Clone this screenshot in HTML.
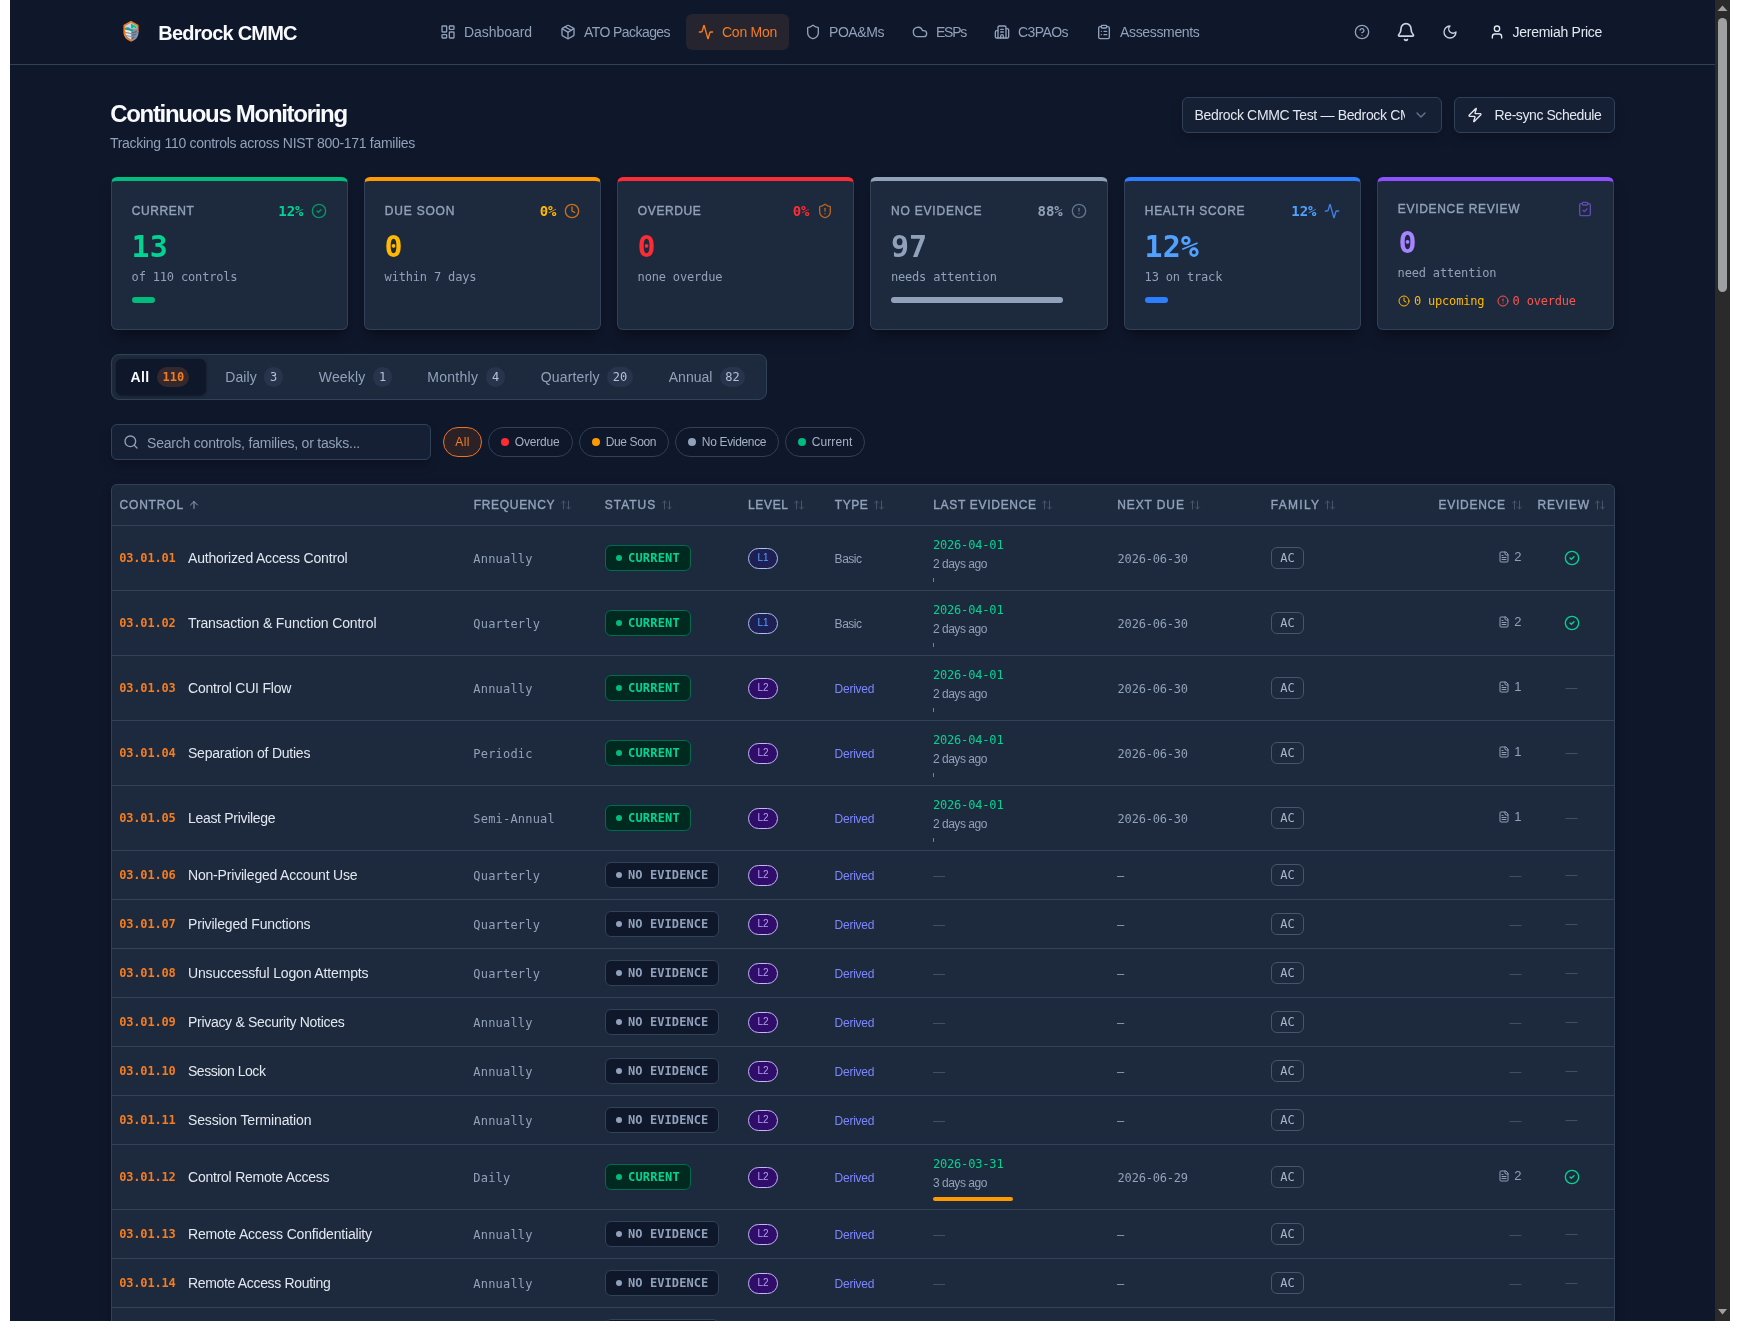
<!DOCTYPE html>
<html lang="en"><head><meta charset="utf-8"><title>Continuous Monitoring — Bedrock CMMC</title>
<style>
*{box-sizing:border-box}
html,body{margin:0;padding:0;background:#fff;overflow:hidden}
body{font-family:'Liberation Sans',sans-serif;}
#page{position:relative;width:1740px;height:1331px;overflow:hidden;background:#fff}
#vp{position:absolute;left:10px;top:0;width:1720px;height:1321px;overflow:hidden;background:#0f172b}
#c{position:absolute;left:-10px;top:0;width:1740px;height:1400px;will-change:transform}
.t{position:absolute;white-space:pre;margin:0;padding:0;text-decoration:none;display:block}
h1.t,p.t{font-weight:inherit}
h1.t{font-weight:700}
.i{position:absolute;display:block;overflow:visible}
.hdr{position:absolute;left:10px;top:0;width:1705px;height:65px;border-bottom:1px solid #314158}
.hdr>*,.hdr nav>*{margin-left:-10px}
.hdr nav{margin-left:0}
.navact{position:absolute;border-radius:6px;background:#26242e}
.ctl{position:absolute;border:1px solid #314158;border-radius:6px;background:#162034;box-shadow:0 6px 12px -2px rgba(0,0,0,.28);padding:0;margin:0}
.clip{position:absolute;overflow:hidden}
.card{position:absolute;background:#1d293d;border:1px solid #314158;border-top:4px solid;border-radius:6px;box-shadow:0 10px 15px -3px rgba(0,0,0,.35),0 4px 6px -4px rgba(0,0,0,.3)}
.bar{position:absolute;height:6px;border-radius:3px}
.tabs{position:absolute;background:#1d293d;border:1px solid #314158;border-radius:8px}
.tabact{position:absolute;background:#0f172b;border-radius:6px;box-shadow:0 1px 3px rgba(0,0,0,.4)}
.cnt{position:absolute;height:20px;border-radius:10px;background:#28344b;color:#b4c0d3;font-family:'DejaVu Sans Mono','Liberation Mono',monospace;font-size:12px;line-height:20px;text-align:center}
.cnt.on{background:#33282d;color:#f57c1f;font-weight:700}
.chip{position:absolute;border:1px solid #314158;border-radius:15px}
.chip.on{border-color:#ee7420;background:#2b2227}
.dot{position:absolute;border-radius:50%}
.tbl{position:absolute;background:#1d293d;border:1px solid #314158;border-radius:6px;box-shadow:0 4px 10px rgba(0,0,0,.3)}
.hl{position:absolute;height:1px;background:#314158}
.st{position:absolute;height:26px;border:1px solid;border-radius:6px;font-family:'DejaVu Sans Mono','Liberation Mono',monospace;font-size:12px;font-weight:700;line-height:24px;padding:0 10px 0 22px;letter-spacing:.2px;white-space:pre}
.st i{position:absolute;left:10px;top:9px;width:6px;height:6px;border-radius:50%}
.st.cur{background:#002a20;border-color:#006b50;color:#00d492}
.st.cur i{background:#00bc7d}
.st.non{background:#0f172b;border-color:#314158;color:#90a1b9;letter-spacing:.08px}
.st.non i{background:#90a1b9}
.lv{position:absolute;width:30px;height:21px;border:1px solid;border-radius:11px;font-size:10px;line-height:18px;text-align:center}
.lv.l1{background:#1e1f52;border-color:#a9c0f0;color:#51a2ff}
.lv.l2{background:#2f0d68;border-color:#c4b4ff;color:#b69cff}
.fam{position:absolute;width:33px;height:22px;border:1px solid #45556c;border-radius:6px;font-family:'DejaVu Sans Mono','Liberation Mono',monospace;font-size:12px;line-height:20px;text-align:center;color:#a9b5c8}
.pg{position:absolute;height:4px;border-radius:2px}
#sb{position:absolute;left:1705px;top:0;width:15px;height:1321px;background:#2a2a2a}
#sb i{position:absolute;left:3px;top:18px;width:9px;height:274px;border-radius:5px;background:#9fa0a1}
#sb svg{position:absolute;left:0}
</style></head>
<body><div id="page"><div id="vp"><div id="c">
<header class="hdr">
<svg class="i" style="left:121px;top:19px" width="20" height="24" viewBox="0 0 20 24">
<path d="M10 2.6 L16.8 6.4 V13.6 C16.8 17.6 13.8 20.4 10 21.8 C6.2 20.4 3.2 17.6 3.2 13.6 V6.4 Z" fill="#8a97ab"/>
<path d="M4.2 7 L10 3.8 L15.8 7 V9.5 L4.2 9.5 Z" fill="#cdd4df"/>
<path d="M9.9 4.4 L15.4 7.4 V9.2 L12.6 8.3 L11.4 9.4 L9.9 8.5 Z" fill="#00c389"/>
<path d="M4.2 9 L6 8.6 L9 9.4 L12.6 11.8 L12 12.6 L8.4 11.4 L4.2 10.6 Z" fill="#14a37f"/>
<path d="M5 8.4 L7.6 8.2 L9.2 9.4 L6.6 9.8 Z" fill="#3b82f6"/>
<path d="M4.2 10.8 L8 11.5 L10.5 12.6 V14 L4.2 12.8 Z" fill="#e8ecf2"/>
<path d="M10.5 12.6 L12.4 12.9 L15.8 11.2 V13.4 L10.5 14.6 Z" fill="#5d6b82"/>
<path d="M4.3 14 L10.5 15.4 V16.9 L5 15.9 Z" fill="#e8ecf2"/>
<path d="M10.5 15.4 L15.7 14.4 L15.1 16 L10.5 17 Z" fill="#5d6b82"/>
<path d="M5.8 17.1 L10.5 18.2 V20.6 C8.6 19.9 6.8 18.6 5.8 17.1 Z" fill="#dfe5ee"/>
<path d="M10.5 18.2 L14.4 17.3 C13.4 18.8 12 19.9 10.5 20.6 Z" fill="#5d6b82"/>
<path d="M16.8 12.5 V13.6 C16.8 17.6 13.8 20.4 10.9 21.5" fill="none" stroke="#8493ad" stroke-width="1.5" stroke-linecap="round"/>
<path d="M16.8 12.4 V6.4 L10 2.6 L3.2 6.4 V13.6 C3.2 17.6 6.2 20.4 10 21.8 L11.2 21.3" fill="none" stroke="#f47a1c" stroke-width="1.6" stroke-linejoin="round" stroke-linecap="round"/>
</svg>
<span class="t" style="left:158.30px;top:23.08px;font-size:20px;line-height:20px;color:#f8fafc;font-weight:700;letter-spacing:-0.775px">Bedrock CMMC</span>
<nav>
<svg class="i" style="left:440.00px;top:24.00px;" width="16" height="16" viewBox="0 0 24 24" fill="none" stroke="#90a1b9" stroke-width="2" stroke-linecap="round" stroke-linejoin="round"><rect width="7" height="9" x="3" y="3" rx="1"/><rect width="7" height="5" x="14" y="3" rx="1"/><rect width="7" height="9" x="14" y="12" rx="1"/><rect width="7" height="5" x="3" y="16" rx="1"/></svg>
<a class="t" style="left:464.00px;top:25.16px;font-size:14px;line-height:14px;color:#90a1b9;letter-spacing:-0.056px">Dashboard</a>
<svg class="i" style="left:560.00px;top:24.00px;" width="16" height="16" viewBox="0 0 24 24" fill="none" stroke="#90a1b9" stroke-width="2" stroke-linecap="round" stroke-linejoin="round"><path d="M11 21.73a2 2 0 0 0 2 0l7-4A2 2 0 0 0 21 16V8a2 2 0 0 0-1-1.73l-7-4a2 2 0 0 0-2 0l-7 4A2 2 0 0 0 3 8v8a2 2 0 0 0 1 1.73z"/><path d="M12 22V12"/><path d="m3.3 7 7.703 4.734a2 2 0 0 0 1.994 0L20.7 7"/><path d="m7.5 4.27 9 5.15"/></svg>
<a class="t" style="left:584.00px;top:25.16px;font-size:14px;line-height:14px;color:#90a1b9;letter-spacing:-0.572px">ATO Packages</a>
<div class="navact" style="left:686px;top:14px;width:103px;height:36px"></div>
<svg class="i" style="left:698.00px;top:24.00px;" width="16" height="16" viewBox="0 0 24 24" fill="none" stroke="#f57c1f" stroke-width="2" stroke-linecap="round" stroke-linejoin="round"><path d="M22 12h-2.48a2 2 0 0 0-1.93 1.46l-2.35 8.36a.25.25 0 0 1-.48 0L9.24 2.18a.25.25 0 0 0-.48 0l-2.35 8.36A2 2 0 0 1 4.49 12H2"/></svg>
<a class="t" style="left:722.00px;top:25.16px;font-size:14px;line-height:14px;color:#f57c1f;letter-spacing:-0.259px">Con Mon</a>
<svg class="i" style="left:805.00px;top:24.00px;" width="16" height="16" viewBox="0 0 24 24" fill="none" stroke="#90a1b9" stroke-width="2" stroke-linecap="round" stroke-linejoin="round"><path d="M20 13c0 5-3.5 7.5-7.66 8.95a1 1 0 0 1-.67-.01C7.5 20.5 4 18 4 13V6a1 1 0 0 1 1-1c2 0 4.5-1.2 6.24-2.72a1.17 1.17 0 0 1 1.52 0C14.51 3.81 17 5 19 5a1 1 0 0 1 1 1z"/></svg>
<a class="t" style="left:829.00px;top:25.16px;font-size:14px;line-height:14px;color:#90a1b9;letter-spacing:-0.430px">POA&amp;Ms</a>
<svg class="i" style="left:912.00px;top:24.00px;" width="16" height="16" viewBox="0 0 24 24" fill="none" stroke="#90a1b9" stroke-width="2" stroke-linecap="round" stroke-linejoin="round"><path d="M17.5 19H9a7 7 0 1 1 6.71-9h1.79a4.5 4.5 0 1 1 0 9Z"/></svg>
<a class="t" style="left:936.00px;top:25.16px;font-size:14px;line-height:14px;color:#90a1b9;letter-spacing:-1.254px">ESPs</a>
<svg class="i" style="left:994.00px;top:24.00px;" width="16" height="16" viewBox="0 0 24 24" fill="none" stroke="#90a1b9" stroke-width="2" stroke-linecap="round" stroke-linejoin="round"><path d="M10 12h4"/><path d="M10 8h4"/><path d="M14 21v-3a2 2 0 0 0-4 0v3"/><path d="M6 10H4a2 2 0 0 0-2 2v7a2 2 0 0 0 2 2h16a2 2 0 0 0 2-2V9a2 2 0 0 0-2-2h-2"/><path d="M6 21V5a2 2 0 0 1 2-2h8a2 2 0 0 1 2 2v16"/></svg>
<a class="t" style="left:1018.00px;top:25.16px;font-size:14px;line-height:14px;color:#90a1b9;letter-spacing:-0.573px">C3PAOs</a>
<svg class="i" style="left:1096.00px;top:24.00px;" width="16" height="16" viewBox="0 0 24 24" fill="none" stroke="#90a1b9" stroke-width="2" stroke-linecap="round" stroke-linejoin="round"><rect width="8" height="4" x="8" y="2" rx="1" ry="1"/><path d="M16 4h2a2 2 0 0 1 2 2v14a2 2 0 0 1-2 2H6a2 2 0 0 1-2-2V6a2 2 0 0 1 2-2h2"/><path d="M12 11h4"/><path d="M12 16h4"/><path d="M8 11h.01"/><path d="M8 16h.01"/></svg>
<a class="t" style="left:1120.00px;top:25.16px;font-size:14px;line-height:14px;color:#90a1b9;letter-spacing:-0.341px">Assessments</a>
</nav>
<svg class="i" style="left:1354.00px;top:24.00px;" width="16" height="16" viewBox="0 0 24 24" fill="none" stroke="#90a1b9" stroke-width="2" stroke-linecap="round" stroke-linejoin="round"><circle cx="12" cy="12" r="10"/><path d="M9.09 9a3 3 0 0 1 5.83 1c0 2-3 3-3 3"/><path d="M12 17h.01"/></svg>
<svg class="i" style="left:1396.00px;top:22.00px;" width="20" height="20" viewBox="0 0 24 24" fill="none" stroke="#cad5e2" stroke-width="2" stroke-linecap="round" stroke-linejoin="round"><path d="M10.268 21a2 2 0 0 0 3.464 0"/><path d="M3.262 15.326A1 1 0 0 0 4 17h16a1 1 0 0 0 .74-1.673C19.41 13.956 18 12.499 18 8A6 6 0 0 0 6 8c0 4.499-1.411 5.956-2.738 7.326"/></svg>
<svg class="i" style="left:1442.00px;top:24.00px;" width="16" height="16" viewBox="0 0 24 24" fill="none" stroke="#cad5e2" stroke-width="2" stroke-linecap="round" stroke-linejoin="round"><path d="M12 3a6 6 0 0 0 9 9 9 9 0 1 1-9-9Z"/></svg>
<svg class="i" style="left:1489.00px;top:24.00px;" width="16" height="16" viewBox="0 0 24 24" fill="none" stroke="#e2e8f0" stroke-width="2" stroke-linecap="round" stroke-linejoin="round"><path d="M19 21v-2a4 4 0 0 0-4-4H9a4 4 0 0 0-4 4v2"/><circle cx="12" cy="7" r="4"/></svg>
<span class="t" style="left:1512.60px;top:25.16px;font-size:14px;line-height:14px;color:#e2e8f0;letter-spacing:-0.277px">Jeremiah Price</span>
</header>
<main>
<h1 class="t" style="left:110.20px;top:102.20px;font-size:24px;line-height:24px;color:#f8fafc;font-weight:700;letter-spacing:-1.302px">Continuous Monitoring</h1>
<p class="t" style="left:110.00px;top:136.16px;font-size:14px;line-height:14px;color:#90a1b9;letter-spacing:-0.291px">Tracking 110 controls across NIST 800-171 families</p>
<div class="ctl" style="left:1182px;top:97px;width:260px;height:36px">
</div>
<div class="clip" style="left:1194px;top:100px;width:211px;height:30px"><span class="t"  style="left:0.60px;top:8.16px;font-size:14px;line-height:14px;color:#e2e8f0;letter-spacing:-0.340px">Bedrock CMMC Test — Bedrock CMMC</span></div>
<svg class="i" style="left:1413.00px;top:107.00px;" width="16" height="16" viewBox="0 0 24 24" fill="none" stroke="#62748e" stroke-width="2" stroke-linecap="round" stroke-linejoin="round"><path d="m6 9 6 6 6-6"/></svg>
<button class="ctl" style="left:1454px;top:97px;width:161px;height:36px"></button>
<svg class="i" style="left:1467.00px;top:107.00px;" width="16" height="16" viewBox="0 0 24 24" fill="none" stroke="#e2e8f0" stroke-width="2" stroke-linecap="round" stroke-linejoin="round"><path d="M4 14a1 1 0 0 1-.78-1.63l9.9-10.2a.5.5 0 0 1 .86.46l-1.92 6.02A1 1 0 0 0 13 10h7a1 1 0 0 1 .78 1.63l-9.9 10.2a.5.5 0 0 1-.86-.46l1.92-6.02A1 1 0 0 0 11 14z"/></svg>
<span class="t" style="left:1494.60px;top:108.16px;font-size:14px;line-height:14px;color:#e2e8f0;letter-spacing:-0.427px">Re-sync Schedule</span>
<section class="card" style="left:111px;top:177px;width:237.33px;height:153px;border-top-color:#00bc7d"></section>
<span class="t" style="left:131.80px;top:204.65px;font-size:12px;line-height:12px;color:#90a1b9;-webkit-text-stroke:0.38px;letter-spacing:0.575px">CURRENT</span>
<span class="t" style="right:1436.50px;top:204.16px;font-size:14px;line-height:14px;color:#00d492;font-family:'DejaVu Sans Mono','Liberation Mono',monospace;font-weight:700;letter-spacing:0.000px">12%</span>
<svg class="i" style="left:311.30px;top:203.00px;" width="16" height="16" viewBox="0 0 24 24" fill="none" stroke="#009966" stroke-width="2" stroke-linecap="round" stroke-linejoin="round"><circle cx="12" cy="12" r="10"/><path d="m9 12 2 2 4-4"/></svg>
<span class="t" style="left:131.60px;top:231.62px;font-size:30px;line-height:30px;color:#00d492;font-family:'DejaVu Sans Mono','Liberation Mono',monospace;font-weight:700;letter-spacing:0.000px">13</span>
<span class="t" style="left:131.60px;top:271.15px;font-size:12px;line-height:12px;color:#90a1b9;font-family:'DejaVu Sans Mono','Liberation Mono',monospace;letter-spacing:-0.170px">of 110 controls</span>
<div class="bar" style="left:132px;top:297px;width:23px;background:#00bc7d"></div>
<section class="card" style="left:364px;top:177px;width:237.33px;height:153px;border-top-color:#fe9a00"></section>
<span class="t" style="left:384.80px;top:204.65px;font-size:12px;line-height:12px;color:#90a1b9;-webkit-text-stroke:0.38px;letter-spacing:0.798px">DUE SOON</span>
<span class="t" style="right:1183.50px;top:204.16px;font-size:14px;line-height:14px;color:#ffb900;font-family:'DejaVu Sans Mono','Liberation Mono',monospace;font-weight:700;letter-spacing:0.000px">0%</span>
<svg class="i" style="left:564.30px;top:203.00px;" width="16" height="16" viewBox="0 0 24 24" fill="none" stroke="#c8701e" stroke-width="2" stroke-linecap="round" stroke-linejoin="round"><circle cx="12" cy="12" r="10"/><polyline points="12 6 12 12 16 14"/></svg>
<span class="t" style="left:384.60px;top:231.62px;font-size:30px;line-height:30px;color:#ffb900;font-family:'DejaVu Sans Mono','Liberation Mono',monospace;font-weight:700;letter-spacing:0.000px">0</span>
<span class="t" style="left:384.60px;top:271.15px;font-size:12px;line-height:12px;color:#90a1b9;font-family:'DejaVu Sans Mono','Liberation Mono',monospace;letter-spacing:-0.170px">within 7 days</span>
<section class="card" style="left:617px;top:177px;width:237.33px;height:153px;border-top-color:#fb2c36"></section>
<span class="t" style="left:637.80px;top:204.65px;font-size:12px;line-height:12px;color:#90a1b9;-webkit-text-stroke:0.38px;letter-spacing:0.622px">OVERDUE</span>
<span class="t" style="right:930.50px;top:204.16px;font-size:14px;line-height:14px;color:#fb2c36;font-family:'DejaVu Sans Mono','Liberation Mono',monospace;font-weight:700;letter-spacing:0.000px">0%</span>
<svg class="i" style="left:817.30px;top:203.00px;" width="16" height="16" viewBox="0 0 24 24" fill="none" stroke="#b8641f" stroke-width="2" stroke-linecap="round" stroke-linejoin="round"><path d="M20 13c0 5-3.5 7.5-7.66 8.95a1 1 0 0 1-.67-.01C7.5 20.5 4 18 4 13V6a1 1 0 0 1 1-1c2 0 4.5-1.2 6.24-2.72a1.17 1.17 0 0 1 1.52 0C14.51 3.81 17 5 19 5a1 1 0 0 1 1 1z"/><path d="M12 8v4"/><path d="M12 16h.01"/></svg>
<span class="t" style="left:637.60px;top:231.62px;font-size:30px;line-height:30px;color:#fb2c36;font-family:'DejaVu Sans Mono','Liberation Mono',monospace;font-weight:700;letter-spacing:0.000px">0</span>
<span class="t" style="left:637.60px;top:271.15px;font-size:12px;line-height:12px;color:#90a1b9;font-family:'DejaVu Sans Mono','Liberation Mono',monospace;letter-spacing:-0.170px">none overdue</span>
<section class="card" style="left:870.3px;top:177px;width:237.33px;height:153px;border-top-color:#90a1b9"></section>
<span class="t" style="left:891.10px;top:204.65px;font-size:12px;line-height:12px;color:#90a1b9;-webkit-text-stroke:0.38px;letter-spacing:0.783px">NO EVIDENCE</span>
<span class="t" style="right:677.20px;top:204.16px;font-size:14px;line-height:14px;color:#90a1b9;font-family:'DejaVu Sans Mono','Liberation Mono',monospace;font-weight:700;letter-spacing:0.000px">88%</span>
<svg class="i" style="left:1070.60px;top:203.00px;" width="16" height="16" viewBox="0 0 24 24" fill="none" stroke="#62748e" stroke-width="2" stroke-linecap="round" stroke-linejoin="round"><circle cx="12" cy="12" r="10"/><line x1="12" x2="12" y1="8" y2="12"/><line x1="12" x2="12.01" y1="16" y2="16"/></svg>
<span class="t" style="left:890.90px;top:231.62px;font-size:30px;line-height:30px;color:#90a1b9;font-family:'DejaVu Sans Mono','Liberation Mono',monospace;font-weight:700;letter-spacing:0.000px">97</span>
<span class="t" style="left:890.90px;top:271.15px;font-size:12px;line-height:12px;color:#90a1b9;font-family:'DejaVu Sans Mono','Liberation Mono',monospace;letter-spacing:-0.170px">needs attention</span>
<div class="bar" style="left:891.3px;top:297px;width:172px;background:#90a1b9"></div>
<section class="card" style="left:1124px;top:177px;width:237.33px;height:153px;border-top-color:#2b7fff"></section>
<span class="t" style="left:1144.80px;top:204.65px;font-size:12px;line-height:12px;color:#90a1b9;-webkit-text-stroke:0.38px;letter-spacing:0.669px">HEALTH SCORE</span>
<span class="t" style="right:423.50px;top:204.16px;font-size:14px;line-height:14px;color:#51a2ff;font-family:'DejaVu Sans Mono','Liberation Mono',monospace;font-weight:700;letter-spacing:0.000px">12%</span>
<svg class="i" style="left:1324.30px;top:203.00px;" width="16" height="16" viewBox="0 0 24 24" fill="none" stroke="#3f7fe0" stroke-width="2" stroke-linecap="round" stroke-linejoin="round"><path d="M22 12h-2.48a2 2 0 0 0-1.93 1.46l-2.35 8.36a.25.25 0 0 1-.48 0L9.24 2.18a.25.25 0 0 0-.48 0l-2.35 8.36A2 2 0 0 1 4.49 12H2"/></svg>
<span class="t" style="left:1144.60px;top:231.62px;font-size:30px;line-height:30px;color:#51a2ff;font-family:'DejaVu Sans Mono','Liberation Mono',monospace;font-weight:700;letter-spacing:0.000px">12%</span>
<span class="t" style="left:1144.60px;top:271.15px;font-size:12px;line-height:12px;color:#90a1b9;font-family:'DejaVu Sans Mono','Liberation Mono',monospace;letter-spacing:-0.170px">13 on track</span>
<div class="bar" style="left:1145px;top:297px;width:23px;background:#2b7fff"></div>
<section class="card" style="left:1377px;top:177px;width:237.33px;height:153px;border-top-color:#8e51ff"></section>
<span class="t" style="left:1397.80px;top:202.85px;font-size:12px;line-height:12px;color:#90a1b9;-webkit-text-stroke:0.38px;letter-spacing:0.691px">EVIDENCE REVIEW</span>
<svg class="i" style="left:1577.00px;top:201.00px;" width="16" height="16" viewBox="0 0 24 24" fill="none" stroke="#5f4bb0" stroke-width="2" stroke-linecap="round" stroke-linejoin="round"><rect width="8" height="4" x="8" y="2" rx="1" ry="1"/><path d="M16 4h2a2 2 0 0 1 2 2v14a2 2 0 0 1-2 2H6a2 2 0 0 1-2-2V6a2 2 0 0 1 2-2h2"/><path d="m9 14 2 2 4-4"/></svg>
<span class="t" style="left:1398.40px;top:227.82px;font-size:30px;line-height:30px;color:#a684ff;font-family:'DejaVu Sans Mono','Liberation Mono',monospace;font-weight:700;letter-spacing:0.000px">0</span>
<span class="t" style="left:1397.60px;top:266.95px;font-size:12px;line-height:12px;color:#90a1b9;font-family:'DejaVu Sans Mono','Liberation Mono',monospace;letter-spacing:-0.170px">need attention</span>
<svg class="i" style="left:1398.00px;top:295.00px;" width="12" height="12" viewBox="0 0 24 24" fill="none" stroke="#ffb900" stroke-width="2" stroke-linecap="round" stroke-linejoin="round"><circle cx="12" cy="12" r="10"/><polyline points="12 6 12 12 16 14"/></svg>
<span class="t" style="left:1414.00px;top:294.55px;font-size:12px;line-height:12px;color:#ffb900;font-family:'DejaVu Sans Mono','Liberation Mono',monospace;letter-spacing:-0.200px">0 upcoming</span>
<svg class="i" style="left:1497.00px;top:295.00px;" width="12" height="12" viewBox="0 0 24 24" fill="none" stroke="#f9564f" stroke-width="2" stroke-linecap="round" stroke-linejoin="round"><circle cx="12" cy="12" r="10"/><line x1="12" x2="12" y1="8" y2="12"/><line x1="12" x2="12.01" y1="16" y2="16"/></svg>
<span class="t" style="left:1512.60px;top:294.55px;font-size:12px;line-height:12px;color:#f9564f;font-family:'DejaVu Sans Mono','Liberation Mono',monospace;letter-spacing:-0.200px">0 overdue</span>
<div class="tabs" style="left:111px;top:354px;width:656px;height:46px"></div>
<div class="tabact" style="left:116px;top:359px;width:90px;height:36px"></div>
<span class="t" style="left:130.60px;top:370.16px;font-size:14px;line-height:14px;color:#f8fafc;font-weight:700;letter-spacing:0.370px">All</span>
<span class="cnt on" style="left:157.4px;top:367px;width:32px">110</span>
<span class="t" style="left:225.30px;top:370.16px;font-size:14px;line-height:14px;color:#90a1b9;letter-spacing:0.075px">Daily</span>
<span class="cnt" style="left:264px;top:367px;width:19px">3</span>
<span class="t" style="left:318.80px;top:370.16px;font-size:14px;line-height:14px;color:#90a1b9;letter-spacing:0.141px">Weekly</span>
<span class="cnt" style="left:373px;top:367px;width:19px">1</span>
<span class="t" style="left:427.20px;top:370.16px;font-size:14px;line-height:14px;color:#90a1b9;letter-spacing:0.281px">Monthly</span>
<span class="cnt" style="left:486px;top:367px;width:19px">4</span>
<span class="t" style="left:540.80px;top:370.16px;font-size:14px;line-height:14px;color:#90a1b9;letter-spacing:0.136px">Quarterly</span>
<span class="cnt" style="left:607.4px;top:367px;width:25.2px">20</span>
<span class="t" style="left:668.80px;top:370.16px;font-size:14px;line-height:14px;color:#90a1b9;letter-spacing:-0.016px">Annual</span>
<span class="cnt" style="left:720px;top:367px;width:25.2px">82</span>
<div class="ctl" style="left:111px;top:424px;width:320px;height:36px"></div>
<svg class="i" style="left:123.00px;top:434.00px;" width="16" height="16" viewBox="0 0 24 24" fill="none" stroke="#90a1b9" stroke-width="2" stroke-linecap="round" stroke-linejoin="round"><circle cx="11" cy="11" r="8"/><path d="m21 21-4.3-4.3"/></svg>
<span class="t" style="left:147.00px;top:436.16px;font-size:14px;line-height:14px;color:#90a1b9;letter-spacing:-0.210px">Search controls, families, or tasks...</span>
<div class="chip on" style="left:443px;top:427px;width:39px;height:30px"></div>
<span class="t" style="left:455.20px;top:435.85px;font-size:12px;line-height:12px;color:#f57c1f;letter-spacing:0.485px">All</span>
<div class="chip" style="left:488px;top:427px;width:85px;height:30px"></div>
<i class="dot" style="left:501px;top:438px;width:8px;height:8px;background:#fb2c36"></i>
<span class="t" style="left:514.80px;top:435.85px;font-size:12px;line-height:12px;color:#a3b1c6;letter-spacing:-0.176px">Overdue</span>
<div class="chip" style="left:579px;top:427px;width:90px;height:30px"></div>
<i class="dot" style="left:592px;top:438px;width:8px;height:8px;background:#fe9a00"></i>
<span class="t" style="left:605.80px;top:435.85px;font-size:12px;line-height:12px;color:#a3b1c6;letter-spacing:-0.397px">Due Soon</span>
<div class="chip" style="left:675px;top:427px;width:104px;height:30px"></div>
<i class="dot" style="left:688px;top:438px;width:8px;height:8px;background:#90a1b9"></i>
<span class="t" style="left:701.80px;top:435.85px;font-size:12px;line-height:12px;color:#a3b1c6;letter-spacing:-0.332px">No Evidence</span>
<div class="chip" style="left:785px;top:427px;width:80px;height:30px"></div>
<i class="dot" style="left:798px;top:438px;width:8px;height:8px;background:#00bc7d"></i>
<span class="t" style="left:811.80px;top:435.85px;font-size:12px;line-height:12px;color:#a3b1c6;letter-spacing:0.069px">Current</span>
<div class="tbl" style="left:111px;top:484px;width:1504px;height:900px"></div>
<span class="t" style="left:119.50px;top:498.85px;font-size:12px;line-height:12px;color:#90a1b9;-webkit-text-stroke:0.38px;letter-spacing:0.818px">CONTROL</span>
<span class="t" style="left:473.70px;top:498.85px;font-size:12px;line-height:12px;color:#90a1b9;-webkit-text-stroke:0.38px;letter-spacing:0.695px">FREQUENCY</span>
<svg class="i" style="left:560.00px;top:498.50px;" width="12" height="12" viewBox="0 0 24 24" fill="none" stroke="#45556c" stroke-width="2" stroke-linecap="round" stroke-linejoin="round"><path d="m21 16-4 4-4-4"/><path d="M17 20V4"/><path d="m3 8 4-4 4 4"/><path d="M7 4v16"/></svg>
<span class="t" style="left:604.70px;top:498.85px;font-size:12px;line-height:12px;color:#90a1b9;-webkit-text-stroke:0.38px;letter-spacing:1.006px">STATUS</span>
<svg class="i" style="left:660.50px;top:498.50px;" width="12" height="12" viewBox="0 0 24 24" fill="none" stroke="#45556c" stroke-width="2" stroke-linecap="round" stroke-linejoin="round"><path d="m21 16-4 4-4-4"/><path d="M17 20V4"/><path d="m3 8 4-4 4 4"/><path d="M7 4v16"/></svg>
<span class="t" style="left:748.00px;top:498.85px;font-size:12px;line-height:12px;color:#90a1b9;-webkit-text-stroke:0.38px;letter-spacing:0.648px">LEVEL</span>
<svg class="i" style="left:792.70px;top:498.50px;" width="12" height="12" viewBox="0 0 24 24" fill="none" stroke="#45556c" stroke-width="2" stroke-linecap="round" stroke-linejoin="round"><path d="m21 16-4 4-4-4"/><path d="M17 20V4"/><path d="m3 8 4-4 4 4"/><path d="M7 4v16"/></svg>
<span class="t" style="left:834.80px;top:498.85px;font-size:12px;line-height:12px;color:#90a1b9;-webkit-text-stroke:0.38px;letter-spacing:0.564px">TYPE</span>
<svg class="i" style="left:873.00px;top:498.50px;" width="12" height="12" viewBox="0 0 24 24" fill="none" stroke="#45556c" stroke-width="2" stroke-linecap="round" stroke-linejoin="round"><path d="m21 16-4 4-4-4"/><path d="M17 20V4"/><path d="m3 8 4-4 4 4"/><path d="M7 4v16"/></svg>
<span class="t" style="left:933.20px;top:498.85px;font-size:12px;line-height:12px;color:#90a1b9;-webkit-text-stroke:0.38px;letter-spacing:0.701px">LAST EVIDENCE</span>
<svg class="i" style="left:1040.60px;top:498.50px;" width="12" height="12" viewBox="0 0 24 24" fill="none" stroke="#45556c" stroke-width="2" stroke-linecap="round" stroke-linejoin="round"><path d="m21 16-4 4-4-4"/><path d="M17 20V4"/><path d="m3 8 4-4 4 4"/><path d="M7 4v16"/></svg>
<span class="t" style="left:1117.20px;top:498.85px;font-size:12px;line-height:12px;color:#90a1b9;-webkit-text-stroke:0.38px;letter-spacing:0.891px">NEXT DUE</span>
<svg class="i" style="left:1188.60px;top:498.50px;" width="12" height="12" viewBox="0 0 24 24" fill="none" stroke="#45556c" stroke-width="2" stroke-linecap="round" stroke-linejoin="round"><path d="m21 16-4 4-4-4"/><path d="M17 20V4"/><path d="m3 8 4-4 4 4"/><path d="M7 4v16"/></svg>
<span class="t" style="left:1270.70px;top:498.85px;font-size:12px;line-height:12px;color:#90a1b9;-webkit-text-stroke:0.38px;letter-spacing:1.301px">FAMILY</span>
<svg class="i" style="left:1324.40px;top:498.50px;" width="12" height="12" viewBox="0 0 24 24" fill="none" stroke="#45556c" stroke-width="2" stroke-linecap="round" stroke-linejoin="round"><path d="m21 16-4 4-4-4"/><path d="M17 20V4"/><path d="m3 8 4-4 4 4"/><path d="M7 4v16"/></svg>
<span class="t" style="left:1438.40px;top:498.85px;font-size:12px;line-height:12px;color:#90a1b9;-webkit-text-stroke:0.38px;letter-spacing:0.755px">EVIDENCE</span>
<svg class="i" style="left:1510.50px;top:498.50px;" width="12" height="12" viewBox="0 0 24 24" fill="none" stroke="#45556c" stroke-width="2" stroke-linecap="round" stroke-linejoin="round"><path d="m21 16-4 4-4-4"/><path d="M17 20V4"/><path d="m3 8 4-4 4 4"/><path d="M7 4v16"/></svg>
<span class="t" style="left:1537.40px;top:498.85px;font-size:12px;line-height:12px;color:#90a1b9;-webkit-text-stroke:0.38px;letter-spacing:0.876px">REVIEW</span>
<svg class="i" style="left:1593.60px;top:498.50px;" width="12" height="12" viewBox="0 0 24 24" fill="none" stroke="#45556c" stroke-width="2" stroke-linecap="round" stroke-linejoin="round"><path d="m21 16-4 4-4-4"/><path d="M17 20V4"/><path d="m3 8 4-4 4 4"/><path d="M7 4v16"/></svg>
<svg class="i" style="left:188.20px;top:498.50px;" width="12" height="12" viewBox="0 0 24 24" fill="none" stroke="#90a1b9" stroke-width="2" stroke-linecap="round" stroke-linejoin="round"><path d="m5 12 7-7 7 7"/><path d="M12 19V5"/></svg>
<div class="hl" style="left:112px;top:525px;width:1502px"></div>
<span class="t" style="left:119.20px;top:551.75px;font-size:12px;line-height:12px;color:#f57c1f;font-family:'DejaVu Sans Mono','Liberation Mono',monospace;font-weight:700;letter-spacing:-0.170px">03.01.01</span>
<span class="t" style="left:188.00px;top:550.96px;font-size:14px;line-height:14px;color:#e2e8f0;letter-spacing:-0.192px">Authorized Access Control</span>
<span class="t" style="left:473.30px;top:553.45px;font-size:12px;line-height:12px;color:#90a1b9;font-family:'DejaVu Sans Mono','Liberation Mono',monospace;letter-spacing:0.200px">Annually</span>
<span class="st cur" style="left:605px;top:545.0px"><i></i>CURRENT</span>
<span class="lv l1" style="left:748px;top:547.5px">L1</span>
<span class="t" style="left:834.60px;top:553.25px;font-size:12px;line-height:12px;color:#90a1b9;letter-spacing:-0.469px">Basic</span>
<span class="t" style="left:932.90px;top:538.85px;font-size:12px;line-height:12px;color:#00d492;font-family:'DejaVu Sans Mono','Liberation Mono',monospace;letter-spacing:-0.170px">2026-04-01</span>
<span class="t" style="left:932.90px;top:557.85px;font-size:12px;line-height:12px;color:#90a1b9;letter-spacing:-0.472px">2 days ago</span>
<div class="pg" style="left:933px;top:578px;width:1px;background:#00bc7d;border-radius:0"></div>
<span class="t" style="left:1117.60px;top:553.35px;font-size:12px;line-height:12px;color:#90a1b9;font-family:'DejaVu Sans Mono','Liberation Mono',monospace;letter-spacing:-0.200px">2026-06-30</span>
<span class="fam" style="left:1271px;top:547.0px">AC</span>
<svg class="i" style="left:1498.00px;top:551.00px;" width="12" height="12" viewBox="0 0 24 24" fill="none" stroke="#90a1b9" stroke-width="2" stroke-linecap="round" stroke-linejoin="round"><path d="M15 2H6a2 2 0 0 0-2 2v16a2 2 0 0 0 2 2h12a2 2 0 0 0 2-2V7Z"/><path d="M14 2v4a2 2 0 0 0 2 2h4"/><path d="M10 9H8"/><path d="M16 13H8"/><path d="M16 17H8"/></svg>
<span class="t" style="right:218.60px;top:549.90px;font-size:13px;line-height:13px;color:#90a1b9;letter-spacing:0.000px">2</span>
<svg class="i" style="left:1564.00px;top:550.00px;" width="16" height="16" viewBox="0 0 24 24" fill="none" stroke="#00d492" stroke-width="2" stroke-linecap="round" stroke-linejoin="round"><circle cx="12" cy="12" r="10"/><path d="m9 12 2 2 4-4"/></svg>
<div class="hl" style="left:112px;top:590px;width:1502px"></div>
<span class="t" style="left:119.20px;top:616.75px;font-size:12px;line-height:12px;color:#f57c1f;font-family:'DejaVu Sans Mono','Liberation Mono',monospace;font-weight:700;letter-spacing:-0.170px">03.01.02</span>
<span class="t" style="left:188.00px;top:615.96px;font-size:14px;line-height:14px;color:#e2e8f0;letter-spacing:-0.136px">Transaction &amp; Function Control</span>
<span class="t" style="left:473.30px;top:618.45px;font-size:12px;line-height:12px;color:#90a1b9;font-family:'DejaVu Sans Mono','Liberation Mono',monospace;letter-spacing:0.200px">Quarterly</span>
<span class="st cur" style="left:605px;top:610.0px"><i></i>CURRENT</span>
<span class="lv l1" style="left:748px;top:612.5px">L1</span>
<span class="t" style="left:834.60px;top:618.25px;font-size:12px;line-height:12px;color:#90a1b9;letter-spacing:-0.469px">Basic</span>
<span class="t" style="left:932.90px;top:603.85px;font-size:12px;line-height:12px;color:#00d492;font-family:'DejaVu Sans Mono','Liberation Mono',monospace;letter-spacing:-0.170px">2026-04-01</span>
<span class="t" style="left:932.90px;top:622.85px;font-size:12px;line-height:12px;color:#90a1b9;letter-spacing:-0.472px">2 days ago</span>
<div class="pg" style="left:933px;top:643px;width:1px;background:#00bc7d;border-radius:0"></div>
<span class="t" style="left:1117.60px;top:618.35px;font-size:12px;line-height:12px;color:#90a1b9;font-family:'DejaVu Sans Mono','Liberation Mono',monospace;letter-spacing:-0.200px">2026-06-30</span>
<span class="fam" style="left:1271px;top:612.0px">AC</span>
<svg class="i" style="left:1498.00px;top:616.00px;" width="12" height="12" viewBox="0 0 24 24" fill="none" stroke="#90a1b9" stroke-width="2" stroke-linecap="round" stroke-linejoin="round"><path d="M15 2H6a2 2 0 0 0-2 2v16a2 2 0 0 0 2 2h12a2 2 0 0 0 2-2V7Z"/><path d="M14 2v4a2 2 0 0 0 2 2h4"/><path d="M10 9H8"/><path d="M16 13H8"/><path d="M16 17H8"/></svg>
<span class="t" style="right:218.60px;top:614.90px;font-size:13px;line-height:13px;color:#90a1b9;letter-spacing:0.000px">2</span>
<svg class="i" style="left:1564.00px;top:615.00px;" width="16" height="16" viewBox="0 0 24 24" fill="none" stroke="#00d492" stroke-width="2" stroke-linecap="round" stroke-linejoin="round"><circle cx="12" cy="12" r="10"/><path d="m9 12 2 2 4-4"/></svg>
<div class="hl" style="left:112px;top:655px;width:1502px"></div>
<span class="t" style="left:119.20px;top:681.75px;font-size:12px;line-height:12px;color:#f57c1f;font-family:'DejaVu Sans Mono','Liberation Mono',monospace;font-weight:700;letter-spacing:-0.170px">03.01.03</span>
<span class="t" style="left:188.00px;top:680.96px;font-size:14px;line-height:14px;color:#e2e8f0;letter-spacing:-0.218px">Control CUI Flow</span>
<span class="t" style="left:473.30px;top:683.45px;font-size:12px;line-height:12px;color:#90a1b9;font-family:'DejaVu Sans Mono','Liberation Mono',monospace;letter-spacing:0.200px">Annually</span>
<span class="st cur" style="left:605px;top:675.0px"><i></i>CURRENT</span>
<span class="lv l2" style="left:748px;top:677.5px">L2</span>
<span class="t" style="left:834.60px;top:683.25px;font-size:12px;line-height:12px;color:#7c86ff;letter-spacing:-0.251px">Derived</span>
<span class="t" style="left:932.90px;top:668.85px;font-size:12px;line-height:12px;color:#00d492;font-family:'DejaVu Sans Mono','Liberation Mono',monospace;letter-spacing:-0.170px">2026-04-01</span>
<span class="t" style="left:932.90px;top:687.85px;font-size:12px;line-height:12px;color:#90a1b9;letter-spacing:-0.472px">2 days ago</span>
<div class="pg" style="left:933px;top:708px;width:1px;background:#00bc7d;border-radius:0"></div>
<span class="t" style="left:1117.60px;top:683.35px;font-size:12px;line-height:12px;color:#90a1b9;font-family:'DejaVu Sans Mono','Liberation Mono',monospace;letter-spacing:-0.200px">2026-06-30</span>
<span class="fam" style="left:1271px;top:677.0px">AC</span>
<svg class="i" style="left:1498.00px;top:681.00px;" width="12" height="12" viewBox="0 0 24 24" fill="none" stroke="#90a1b9" stroke-width="2" stroke-linecap="round" stroke-linejoin="round"><path d="M15 2H6a2 2 0 0 0-2 2v16a2 2 0 0 0 2 2h12a2 2 0 0 0 2-2V7Z"/><path d="M14 2v4a2 2 0 0 0 2 2h4"/><path d="M10 9H8"/><path d="M16 13H8"/><path d="M16 17H8"/></svg>
<span class="t" style="right:218.60px;top:679.90px;font-size:13px;line-height:13px;color:#90a1b9;letter-spacing:0.000px">1</span>
<span class="t" style="left:1565.50px;top:682.25px;font-size:12px;line-height:12px;color:#45556c;letter-spacing:0.000px">—</span>
<div class="hl" style="left:112px;top:720px;width:1502px"></div>
<span class="t" style="left:119.20px;top:746.75px;font-size:12px;line-height:12px;color:#f57c1f;font-family:'DejaVu Sans Mono','Liberation Mono',monospace;font-weight:700;letter-spacing:-0.170px">03.01.04</span>
<span class="t" style="left:188.00px;top:745.96px;font-size:14px;line-height:14px;color:#e2e8f0;letter-spacing:-0.233px">Separation of Duties</span>
<span class="t" style="left:473.30px;top:748.45px;font-size:12px;line-height:12px;color:#90a1b9;font-family:'DejaVu Sans Mono','Liberation Mono',monospace;letter-spacing:0.200px">Periodic</span>
<span class="st cur" style="left:605px;top:740.0px"><i></i>CURRENT</span>
<span class="lv l2" style="left:748px;top:742.5px">L2</span>
<span class="t" style="left:834.60px;top:748.25px;font-size:12px;line-height:12px;color:#7c86ff;letter-spacing:-0.251px">Derived</span>
<span class="t" style="left:932.90px;top:733.85px;font-size:12px;line-height:12px;color:#00d492;font-family:'DejaVu Sans Mono','Liberation Mono',monospace;letter-spacing:-0.170px">2026-04-01</span>
<span class="t" style="left:932.90px;top:752.85px;font-size:12px;line-height:12px;color:#90a1b9;letter-spacing:-0.472px">2 days ago</span>
<div class="pg" style="left:933px;top:773px;width:1px;background:#00bc7d;border-radius:0"></div>
<span class="t" style="left:1117.60px;top:748.35px;font-size:12px;line-height:12px;color:#90a1b9;font-family:'DejaVu Sans Mono','Liberation Mono',monospace;letter-spacing:-0.200px">2026-06-30</span>
<span class="fam" style="left:1271px;top:742.0px">AC</span>
<svg class="i" style="left:1498.00px;top:746.00px;" width="12" height="12" viewBox="0 0 24 24" fill="none" stroke="#90a1b9" stroke-width="2" stroke-linecap="round" stroke-linejoin="round"><path d="M15 2H6a2 2 0 0 0-2 2v16a2 2 0 0 0 2 2h12a2 2 0 0 0 2-2V7Z"/><path d="M14 2v4a2 2 0 0 0 2 2h4"/><path d="M10 9H8"/><path d="M16 13H8"/><path d="M16 17H8"/></svg>
<span class="t" style="right:218.60px;top:744.90px;font-size:13px;line-height:13px;color:#90a1b9;letter-spacing:0.000px">1</span>
<span class="t" style="left:1565.50px;top:747.25px;font-size:12px;line-height:12px;color:#45556c;letter-spacing:0.000px">—</span>
<div class="hl" style="left:112px;top:785px;width:1502px"></div>
<span class="t" style="left:119.20px;top:811.75px;font-size:12px;line-height:12px;color:#f57c1f;font-family:'DejaVu Sans Mono','Liberation Mono',monospace;font-weight:700;letter-spacing:-0.170px">03.01.05</span>
<span class="t" style="left:188.00px;top:810.96px;font-size:14px;line-height:14px;color:#e2e8f0;letter-spacing:-0.309px">Least Privilege</span>
<span class="t" style="left:473.30px;top:813.45px;font-size:12px;line-height:12px;color:#90a1b9;font-family:'DejaVu Sans Mono','Liberation Mono',monospace;letter-spacing:0.200px">Semi-Annual</span>
<span class="st cur" style="left:605px;top:805.0px"><i></i>CURRENT</span>
<span class="lv l2" style="left:748px;top:807.5px">L2</span>
<span class="t" style="left:834.60px;top:813.25px;font-size:12px;line-height:12px;color:#7c86ff;letter-spacing:-0.251px">Derived</span>
<span class="t" style="left:932.90px;top:798.85px;font-size:12px;line-height:12px;color:#00d492;font-family:'DejaVu Sans Mono','Liberation Mono',monospace;letter-spacing:-0.170px">2026-04-01</span>
<span class="t" style="left:932.90px;top:817.85px;font-size:12px;line-height:12px;color:#90a1b9;letter-spacing:-0.472px">2 days ago</span>
<div class="pg" style="left:933px;top:838px;width:1px;background:#00bc7d;border-radius:0"></div>
<span class="t" style="left:1117.60px;top:813.35px;font-size:12px;line-height:12px;color:#90a1b9;font-family:'DejaVu Sans Mono','Liberation Mono',monospace;letter-spacing:-0.200px">2026-06-30</span>
<span class="fam" style="left:1271px;top:807.0px">AC</span>
<svg class="i" style="left:1498.00px;top:811.00px;" width="12" height="12" viewBox="0 0 24 24" fill="none" stroke="#90a1b9" stroke-width="2" stroke-linecap="round" stroke-linejoin="round"><path d="M15 2H6a2 2 0 0 0-2 2v16a2 2 0 0 0 2 2h12a2 2 0 0 0 2-2V7Z"/><path d="M14 2v4a2 2 0 0 0 2 2h4"/><path d="M10 9H8"/><path d="M16 13H8"/><path d="M16 17H8"/></svg>
<span class="t" style="right:218.60px;top:809.90px;font-size:13px;line-height:13px;color:#90a1b9;letter-spacing:0.000px">1</span>
<span class="t" style="left:1565.50px;top:812.25px;font-size:12px;line-height:12px;color:#45556c;letter-spacing:0.000px">—</span>
<div class="hl" style="left:112px;top:850px;width:1502px"></div>
<span class="t" style="left:119.20px;top:868.75px;font-size:12px;line-height:12px;color:#f57c1f;font-family:'DejaVu Sans Mono','Liberation Mono',monospace;font-weight:700;letter-spacing:-0.170px">03.01.06</span>
<span class="t" style="left:188.00px;top:867.96px;font-size:14px;line-height:14px;color:#e2e8f0;letter-spacing:-0.189px">Non-Privileged Account Use</span>
<span class="t" style="left:473.30px;top:870.45px;font-size:12px;line-height:12px;color:#90a1b9;font-family:'DejaVu Sans Mono','Liberation Mono',monospace;letter-spacing:0.200px">Quarterly</span>
<span class="st non" style="left:605px;top:862.0px"><i></i>NO EVIDENCE</span>
<span class="lv l2" style="left:748px;top:864.5px">L2</span>
<span class="t" style="left:834.60px;top:870.25px;font-size:12px;line-height:12px;color:#7c86ff;letter-spacing:-0.251px">Derived</span>
<span class="t" style="left:932.90px;top:870.25px;font-size:12px;line-height:12px;color:#45556c;letter-spacing:0.000px">—</span>
<span class="t" style="left:1116.90px;top:870.45px;font-size:12px;line-height:12px;color:#90a1b9;font-family:'DejaVu Sans Mono','Liberation Mono',monospace;letter-spacing:0.000px">–</span>
<span class="fam" style="left:1271px;top:864.0px">AC</span>
<span class="t" style="right:218.60px;top:870.25px;font-size:12px;line-height:12px;color:#45556c;letter-spacing:0.000px">—</span>
<span class="t" style="left:1565.50px;top:869.25px;font-size:12px;line-height:12px;color:#45556c;letter-spacing:0.000px">—</span>
<div class="hl" style="left:112px;top:899px;width:1502px"></div>
<span class="t" style="left:119.20px;top:917.75px;font-size:12px;line-height:12px;color:#f57c1f;font-family:'DejaVu Sans Mono','Liberation Mono',monospace;font-weight:700;letter-spacing:-0.170px">03.01.07</span>
<span class="t" style="left:188.00px;top:916.96px;font-size:14px;line-height:14px;color:#e2e8f0;letter-spacing:-0.183px">Privileged Functions</span>
<span class="t" style="left:473.30px;top:919.45px;font-size:12px;line-height:12px;color:#90a1b9;font-family:'DejaVu Sans Mono','Liberation Mono',monospace;letter-spacing:0.200px">Quarterly</span>
<span class="st non" style="left:605px;top:911.0px"><i></i>NO EVIDENCE</span>
<span class="lv l2" style="left:748px;top:913.5px">L2</span>
<span class="t" style="left:834.60px;top:919.25px;font-size:12px;line-height:12px;color:#7c86ff;letter-spacing:-0.251px">Derived</span>
<span class="t" style="left:932.90px;top:919.25px;font-size:12px;line-height:12px;color:#45556c;letter-spacing:0.000px">—</span>
<span class="t" style="left:1116.90px;top:919.45px;font-size:12px;line-height:12px;color:#90a1b9;font-family:'DejaVu Sans Mono','Liberation Mono',monospace;letter-spacing:0.000px">–</span>
<span class="fam" style="left:1271px;top:913.0px">AC</span>
<span class="t" style="right:218.60px;top:919.25px;font-size:12px;line-height:12px;color:#45556c;letter-spacing:0.000px">—</span>
<span class="t" style="left:1565.50px;top:918.25px;font-size:12px;line-height:12px;color:#45556c;letter-spacing:0.000px">—</span>
<div class="hl" style="left:112px;top:948px;width:1502px"></div>
<span class="t" style="left:119.20px;top:966.75px;font-size:12px;line-height:12px;color:#f57c1f;font-family:'DejaVu Sans Mono','Liberation Mono',monospace;font-weight:700;letter-spacing:-0.170px">03.01.08</span>
<span class="t" style="left:188.00px;top:965.96px;font-size:14px;line-height:14px;color:#e2e8f0;letter-spacing:-0.150px">Unsuccessful Logon Attempts</span>
<span class="t" style="left:473.30px;top:968.45px;font-size:12px;line-height:12px;color:#90a1b9;font-family:'DejaVu Sans Mono','Liberation Mono',monospace;letter-spacing:0.200px">Quarterly</span>
<span class="st non" style="left:605px;top:960.0px"><i></i>NO EVIDENCE</span>
<span class="lv l2" style="left:748px;top:962.5px">L2</span>
<span class="t" style="left:834.60px;top:968.25px;font-size:12px;line-height:12px;color:#7c86ff;letter-spacing:-0.251px">Derived</span>
<span class="t" style="left:932.90px;top:968.25px;font-size:12px;line-height:12px;color:#45556c;letter-spacing:0.000px">—</span>
<span class="t" style="left:1116.90px;top:968.45px;font-size:12px;line-height:12px;color:#90a1b9;font-family:'DejaVu Sans Mono','Liberation Mono',monospace;letter-spacing:0.000px">–</span>
<span class="fam" style="left:1271px;top:962.0px">AC</span>
<span class="t" style="right:218.60px;top:968.25px;font-size:12px;line-height:12px;color:#45556c;letter-spacing:0.000px">—</span>
<span class="t" style="left:1565.50px;top:967.25px;font-size:12px;line-height:12px;color:#45556c;letter-spacing:0.000px">—</span>
<div class="hl" style="left:112px;top:997px;width:1502px"></div>
<span class="t" style="left:119.20px;top:1015.75px;font-size:12px;line-height:12px;color:#f57c1f;font-family:'DejaVu Sans Mono','Liberation Mono',monospace;font-weight:700;letter-spacing:-0.170px">03.01.09</span>
<span class="t" style="left:188.00px;top:1014.96px;font-size:14px;line-height:14px;color:#e2e8f0;letter-spacing:-0.299px">Privacy &amp; Security Notices</span>
<span class="t" style="left:473.30px;top:1017.45px;font-size:12px;line-height:12px;color:#90a1b9;font-family:'DejaVu Sans Mono','Liberation Mono',monospace;letter-spacing:0.200px">Annually</span>
<span class="st non" style="left:605px;top:1009.0px"><i></i>NO EVIDENCE</span>
<span class="lv l2" style="left:748px;top:1011.5px">L2</span>
<span class="t" style="left:834.60px;top:1017.25px;font-size:12px;line-height:12px;color:#7c86ff;letter-spacing:-0.251px">Derived</span>
<span class="t" style="left:932.90px;top:1017.25px;font-size:12px;line-height:12px;color:#45556c;letter-spacing:0.000px">—</span>
<span class="t" style="left:1116.90px;top:1017.45px;font-size:12px;line-height:12px;color:#90a1b9;font-family:'DejaVu Sans Mono','Liberation Mono',monospace;letter-spacing:0.000px">–</span>
<span class="fam" style="left:1271px;top:1011.0px">AC</span>
<span class="t" style="right:218.60px;top:1017.25px;font-size:12px;line-height:12px;color:#45556c;letter-spacing:0.000px">—</span>
<span class="t" style="left:1565.50px;top:1016.25px;font-size:12px;line-height:12px;color:#45556c;letter-spacing:0.000px">—</span>
<div class="hl" style="left:112px;top:1046px;width:1502px"></div>
<span class="t" style="left:119.20px;top:1064.75px;font-size:12px;line-height:12px;color:#f57c1f;font-family:'DejaVu Sans Mono','Liberation Mono',monospace;font-weight:700;letter-spacing:-0.170px">03.01.10</span>
<span class="t" style="left:188.00px;top:1063.96px;font-size:14px;line-height:14px;color:#e2e8f0;letter-spacing:-0.490px">Session Lock</span>
<span class="t" style="left:473.30px;top:1066.45px;font-size:12px;line-height:12px;color:#90a1b9;font-family:'DejaVu Sans Mono','Liberation Mono',monospace;letter-spacing:0.200px">Annually</span>
<span class="st non" style="left:605px;top:1058.0px"><i></i>NO EVIDENCE</span>
<span class="lv l2" style="left:748px;top:1060.5px">L2</span>
<span class="t" style="left:834.60px;top:1066.25px;font-size:12px;line-height:12px;color:#7c86ff;letter-spacing:-0.251px">Derived</span>
<span class="t" style="left:932.90px;top:1066.25px;font-size:12px;line-height:12px;color:#45556c;letter-spacing:0.000px">—</span>
<span class="t" style="left:1116.90px;top:1066.45px;font-size:12px;line-height:12px;color:#90a1b9;font-family:'DejaVu Sans Mono','Liberation Mono',monospace;letter-spacing:0.000px">–</span>
<span class="fam" style="left:1271px;top:1060.0px">AC</span>
<span class="t" style="right:218.60px;top:1066.25px;font-size:12px;line-height:12px;color:#45556c;letter-spacing:0.000px">—</span>
<span class="t" style="left:1565.50px;top:1065.25px;font-size:12px;line-height:12px;color:#45556c;letter-spacing:0.000px">—</span>
<div class="hl" style="left:112px;top:1095px;width:1502px"></div>
<span class="t" style="left:119.20px;top:1113.75px;font-size:12px;line-height:12px;color:#f57c1f;font-family:'DejaVu Sans Mono','Liberation Mono',monospace;font-weight:700;letter-spacing:-0.170px">03.01.11</span>
<span class="t" style="left:188.00px;top:1112.96px;font-size:14px;line-height:14px;color:#e2e8f0;letter-spacing:-0.127px">Session Termination</span>
<span class="t" style="left:473.30px;top:1115.45px;font-size:12px;line-height:12px;color:#90a1b9;font-family:'DejaVu Sans Mono','Liberation Mono',monospace;letter-spacing:0.200px">Annually</span>
<span class="st non" style="left:605px;top:1107.0px"><i></i>NO EVIDENCE</span>
<span class="lv l2" style="left:748px;top:1109.5px">L2</span>
<span class="t" style="left:834.60px;top:1115.25px;font-size:12px;line-height:12px;color:#7c86ff;letter-spacing:-0.251px">Derived</span>
<span class="t" style="left:932.90px;top:1115.25px;font-size:12px;line-height:12px;color:#45556c;letter-spacing:0.000px">—</span>
<span class="t" style="left:1116.90px;top:1115.45px;font-size:12px;line-height:12px;color:#90a1b9;font-family:'DejaVu Sans Mono','Liberation Mono',monospace;letter-spacing:0.000px">–</span>
<span class="fam" style="left:1271px;top:1109.0px">AC</span>
<span class="t" style="right:218.60px;top:1115.25px;font-size:12px;line-height:12px;color:#45556c;letter-spacing:0.000px">—</span>
<span class="t" style="left:1565.50px;top:1114.25px;font-size:12px;line-height:12px;color:#45556c;letter-spacing:0.000px">—</span>
<div class="hl" style="left:112px;top:1144px;width:1502px"></div>
<span class="t" style="left:119.20px;top:1170.75px;font-size:12px;line-height:12px;color:#f57c1f;font-family:'DejaVu Sans Mono','Liberation Mono',monospace;font-weight:700;letter-spacing:-0.170px">03.01.12</span>
<span class="t" style="left:188.00px;top:1169.96px;font-size:14px;line-height:14px;color:#e2e8f0;letter-spacing:-0.233px">Control Remote Access</span>
<span class="t" style="left:473.30px;top:1172.45px;font-size:12px;line-height:12px;color:#90a1b9;font-family:'DejaVu Sans Mono','Liberation Mono',monospace;letter-spacing:0.200px">Daily</span>
<span class="st cur" style="left:605px;top:1164.0px"><i></i>CURRENT</span>
<span class="lv l2" style="left:748px;top:1166.5px">L2</span>
<span class="t" style="left:834.60px;top:1172.25px;font-size:12px;line-height:12px;color:#7c86ff;letter-spacing:-0.251px">Derived</span>
<span class="t" style="left:932.90px;top:1157.85px;font-size:12px;line-height:12px;color:#00d492;font-family:'DejaVu Sans Mono','Liberation Mono',monospace;letter-spacing:-0.170px">2026-03-31</span>
<span class="t" style="left:932.90px;top:1176.85px;font-size:12px;line-height:12px;color:#90a1b9;letter-spacing:-0.472px">3 days ago</span>
<div class="pg" style="left:933px;top:1197px;width:80px;background:#fe9a00"></div>
<span class="t" style="left:1117.60px;top:1172.35px;font-size:12px;line-height:12px;color:#90a1b9;font-family:'DejaVu Sans Mono','Liberation Mono',monospace;letter-spacing:-0.200px">2026-06-29</span>
<span class="fam" style="left:1271px;top:1166.0px">AC</span>
<svg class="i" style="left:1498.00px;top:1170.00px;" width="12" height="12" viewBox="0 0 24 24" fill="none" stroke="#90a1b9" stroke-width="2" stroke-linecap="round" stroke-linejoin="round"><path d="M15 2H6a2 2 0 0 0-2 2v16a2 2 0 0 0 2 2h12a2 2 0 0 0 2-2V7Z"/><path d="M14 2v4a2 2 0 0 0 2 2h4"/><path d="M10 9H8"/><path d="M16 13H8"/><path d="M16 17H8"/></svg>
<span class="t" style="right:218.60px;top:1168.90px;font-size:13px;line-height:13px;color:#90a1b9;letter-spacing:0.000px">2</span>
<svg class="i" style="left:1564.00px;top:1169.00px;" width="16" height="16" viewBox="0 0 24 24" fill="none" stroke="#00d492" stroke-width="2" stroke-linecap="round" stroke-linejoin="round"><circle cx="12" cy="12" r="10"/><path d="m9 12 2 2 4-4"/></svg>
<div class="hl" style="left:112px;top:1209px;width:1502px"></div>
<span class="t" style="left:119.20px;top:1227.75px;font-size:12px;line-height:12px;color:#f57c1f;font-family:'DejaVu Sans Mono','Liberation Mono',monospace;font-weight:700;letter-spacing:-0.170px">03.01.13</span>
<span class="t" style="left:188.00px;top:1226.96px;font-size:14px;line-height:14px;color:#e2e8f0;letter-spacing:-0.179px">Remote Access Confidentiality</span>
<span class="t" style="left:473.30px;top:1229.45px;font-size:12px;line-height:12px;color:#90a1b9;font-family:'DejaVu Sans Mono','Liberation Mono',monospace;letter-spacing:0.200px">Annually</span>
<span class="st non" style="left:605px;top:1221.0px"><i></i>NO EVIDENCE</span>
<span class="lv l2" style="left:748px;top:1223.5px">L2</span>
<span class="t" style="left:834.60px;top:1229.25px;font-size:12px;line-height:12px;color:#7c86ff;letter-spacing:-0.251px">Derived</span>
<span class="t" style="left:932.90px;top:1229.25px;font-size:12px;line-height:12px;color:#45556c;letter-spacing:0.000px">—</span>
<span class="t" style="left:1116.90px;top:1229.45px;font-size:12px;line-height:12px;color:#90a1b9;font-family:'DejaVu Sans Mono','Liberation Mono',monospace;letter-spacing:0.000px">–</span>
<span class="fam" style="left:1271px;top:1223.0px">AC</span>
<span class="t" style="right:218.60px;top:1229.25px;font-size:12px;line-height:12px;color:#45556c;letter-spacing:0.000px">—</span>
<span class="t" style="left:1565.50px;top:1228.25px;font-size:12px;line-height:12px;color:#45556c;letter-spacing:0.000px">—</span>
<div class="hl" style="left:112px;top:1258px;width:1502px"></div>
<span class="t" style="left:119.20px;top:1276.75px;font-size:12px;line-height:12px;color:#f57c1f;font-family:'DejaVu Sans Mono','Liberation Mono',monospace;font-weight:700;letter-spacing:-0.170px">03.01.14</span>
<span class="t" style="left:188.00px;top:1275.96px;font-size:14px;line-height:14px;color:#e2e8f0;letter-spacing:-0.334px">Remote Access Routing</span>
<span class="t" style="left:473.30px;top:1278.45px;font-size:12px;line-height:12px;color:#90a1b9;font-family:'DejaVu Sans Mono','Liberation Mono',monospace;letter-spacing:0.200px">Annually</span>
<span class="st non" style="left:605px;top:1270.0px"><i></i>NO EVIDENCE</span>
<span class="lv l2" style="left:748px;top:1272.5px">L2</span>
<span class="t" style="left:834.60px;top:1278.25px;font-size:12px;line-height:12px;color:#7c86ff;letter-spacing:-0.251px">Derived</span>
<span class="t" style="left:932.90px;top:1278.25px;font-size:12px;line-height:12px;color:#45556c;letter-spacing:0.000px">—</span>
<span class="t" style="left:1116.90px;top:1278.45px;font-size:12px;line-height:12px;color:#90a1b9;font-family:'DejaVu Sans Mono','Liberation Mono',monospace;letter-spacing:0.000px">–</span>
<span class="fam" style="left:1271px;top:1272.0px">AC</span>
<span class="t" style="right:218.60px;top:1278.25px;font-size:12px;line-height:12px;color:#45556c;letter-spacing:0.000px">—</span>
<span class="t" style="left:1565.50px;top:1277.25px;font-size:12px;line-height:12px;color:#45556c;letter-spacing:0.000px">—</span>
<div class="hl" style="left:112px;top:1307px;width:1502px"></div>
<span class="t" style="left:119.20px;top:1325.75px;font-size:12px;line-height:12px;color:#f57c1f;font-family:'DejaVu Sans Mono','Liberation Mono',monospace;font-weight:700;letter-spacing:-0.170px">03.01.15</span>
<span class="t" style="left:188.00px;top:1324.96px;font-size:14px;line-height:14px;color:#e2e8f0;letter-spacing:-0.200px">Privileged Remote Commands</span>
<span class="t" style="left:473.30px;top:1327.45px;font-size:12px;line-height:12px;color:#90a1b9;font-family:'DejaVu Sans Mono','Liberation Mono',monospace;letter-spacing:0.200px">Annually</span>
<span class="st non" style="left:605px;top:1319.0px"><i></i>NO EVIDENCE</span>
<span class="lv l2" style="left:748px;top:1321.5px">L2</span>
<span class="t" style="left:834.60px;top:1327.25px;font-size:12px;line-height:12px;color:#7c86ff;letter-spacing:-0.251px">Derived</span>
<span class="t" style="left:932.90px;top:1327.25px;font-size:12px;line-height:12px;color:#45556c;letter-spacing:0.000px">—</span>
<span class="t" style="left:1116.90px;top:1327.45px;font-size:12px;line-height:12px;color:#90a1b9;font-family:'DejaVu Sans Mono','Liberation Mono',monospace;letter-spacing:0.000px">–</span>
<span class="fam" style="left:1271px;top:1321.0px">AC</span>
<span class="t" style="right:218.60px;top:1327.25px;font-size:12px;line-height:12px;color:#45556c;letter-spacing:0.000px">—</span>
<span class="t" style="left:1565.50px;top:1326.25px;font-size:12px;line-height:12px;color:#45556c;letter-spacing:0.000px">—</span>
<div class="hl" style="left:112px;top:1356px;width:1502px"></div>
</main>
</div>
<div id="sb"><svg width="15" height="16" viewBox="0 0 15 16" style="top:0"><path d="M7.5 5.5 L12.5 11 H2.5 Z" fill="#a0a0a0"/></svg><i></i><svg width="15" height="16" viewBox="0 0 15 16" style="top:1304px"><path d="M3 5 H12 L7.5 10.5 Z" fill="#a0a0a0"/></svg></div>
</div></div></body></html>
